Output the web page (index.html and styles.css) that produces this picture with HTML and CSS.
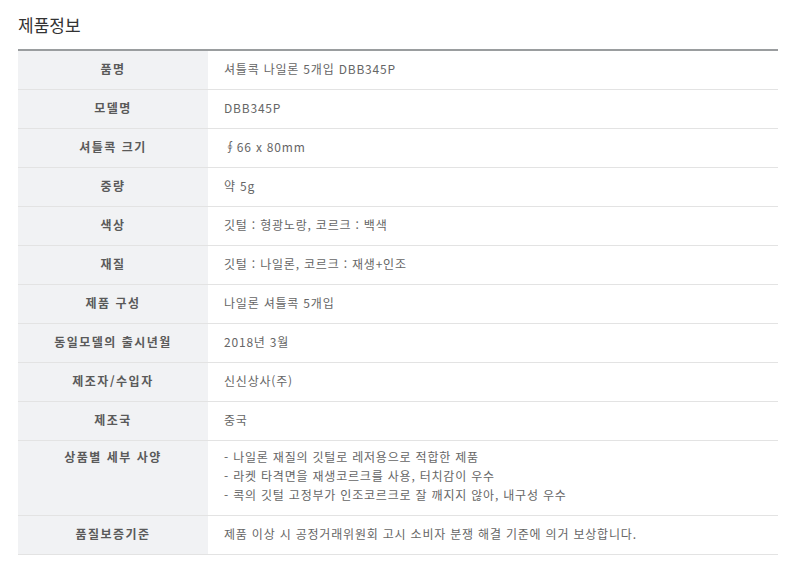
FILE: index.html
```html
<!DOCTYPE html>
<html lang="ko">
<head>
<meta charset="utf-8">
<link rel="stylesheet" href="styles.css">
</head>
<body>
<div class="wrap">
  <h2 class="title">제품정보</h2>
  <div class="info">
    <div class="row"><div class="th">품명</div><div class="td">셔틀콕 나일론 5개입 DBB345P</div></div>
    <div class="row"><div class="th">모델명</div><div class="td">DBB345P</div></div>
    <div class="row"><div class="th">셔틀콕 크기</div><div class="td">∮66 x 80mm</div></div>
    <div class="row"><div class="th">중량</div><div class="td">약 5g</div></div>
    <div class="row"><div class="th">색상</div><div class="td">깃털 : 형광노랑, 코르크 : 백색</div></div>
    <div class="row"><div class="th">재질</div><div class="td">깃털 : 나일론, 코르크 : 재생+인조</div></div>
    <div class="row"><div class="th">제품 구성</div><div class="td">나일론 셔틀콕 5개입</div></div>
    <div class="row"><div class="th">동일모델의 출시년월</div><div class="td">2018년 3월</div></div>
    <div class="row"><div class="th">제조자/수입자</div><div class="td">신신상사(주)</div></div>
    <div class="row"><div class="th">제조국</div><div class="td">중국</div></div>
    <div class="row multi"><div class="th">상품별 세부 사양</div><div class="td">- 나일론 재질의 깃털로 레저용으로 적합한 제품<br>- 라켓 타격면을 재생코르크를 사용, 터치감이 우수<br>- 콕의 깃털 고정부가 인조코르크로 잘 깨지지 않아, 내구성 우수</div></div>
    <div class="row"><div class="th">품질보증기준</div><div class="td">제품 이상 시 공정거래위원회 고시 소비자 분쟁 해결 기준에 의거 보상합니다.</div></div>
  </div>
</div>
</body>
</html>
```
FILE: styles.css
```css
html, body {
  margin: 0;
  padding: 0;
  background: #fff;
}
body {
  font-family: "Noto Sans CJK KR", "Noto Sans", sans-serif;
  font-size: 12px;
  color: #666;
}
.wrap {
  padding: 13px 10px 0 18px;
}
.title {
  margin: 0;
  font-size: 17px;
  line-height: 24px;
  font-weight: normal;
  color: #333;
}
.info {
  margin-top: 12px;
  border-top: 2px solid #9a9d9f;
}
.row {
  display: grid;
  grid-template-columns: 190px 1fr;
  border-bottom: 1px solid #e3e3e3;
}
.th, .td {
  padding: 8px 16px 11px;
  line-height: 19px;
}
.th {
  background: #f1f2f4;
  color: #5a5a5a;
  font-weight: bold;
  text-align: center;
  letter-spacing: 1.5px;
}
.td {
  color: #666;
  letter-spacing: 0.8px;
}
.multi .th, .multi .td {
  padding-top: 6px;
  padding-bottom: 11px;
}
```
